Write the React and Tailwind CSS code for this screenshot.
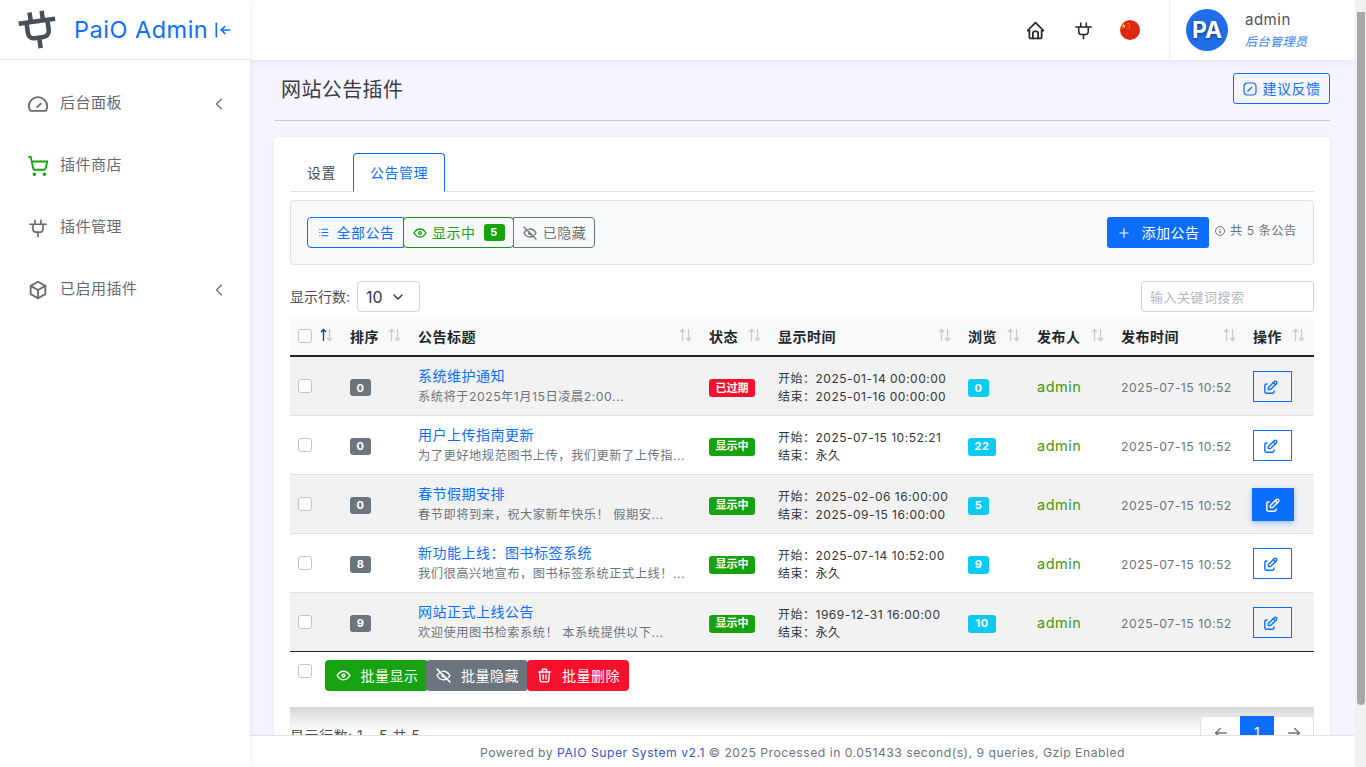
import React from "react";
import { TbHome, TbBox, TbChevronLeft, TbChevronDown, TbEye, TbEyeOff, TbPlus, TbEdit, TbTrash, TbList, TbInfoCircle, TbArrowBarToLeft, TbArrowLeft, TbArrowRight } from "react-icons/tb";
import { ShoppingCart } from "lucide-react";

const FONT = "font-['Inter','Noto_Sans_CJK_SC',sans-serif]";

function Plug({ className, sw = 2 }) {
  return (
    <svg viewBox="0 0 24 24" fill="none" stroke="currentColor" strokeWidth={sw} strokeLinecap="butt" strokeLinejoin="round" className={className}>
      <path d="M1.500 7.500h21M8.500 7.500V2M15.500 7.500V2M6 7.500v6a3.500 3.500 0 0 0 3.500 3.500h5a3.500 3.500 0 0 0 3.500-3.500v-6M12 17v6" />
    </svg>
  );
}

function Gauge({ className }) {
  return (
    <svg viewBox="0 0 24 24" fill="none" stroke="currentColor" strokeWidth="2" strokeLinecap="round" strokeLinejoin="round" className={className}>
      <path d="M4.500 19.500h15a2 2 0 0 0 1.600-1A10 10 0 0 0 22 14.500a10 10 0 0 0-20 0c0 1.500.4 2.800 1 4a1.800 1.800 0 0 0 1.500 1z" />
      <path d="M11 15.500l4-4" />
    </svg>
  );
}

function Sort({ active }) {
  return (
    <svg viewBox="0 0 13 14" className="w-[13px] h-[14px] flex-none mt-[-3px]" fill="none" strokeWidth="1.300">
      <path d="M3.500 13V1.500M1 4l2.500-2.500L6 4" stroke={active ? "#0b3d91" : "#c6c8cc"} />
      <path d="M9.500 1v11.500M7 10l2.500 2.500L12 10" stroke="#c6c8cc" />
    </svg>
  );
}

const navItems = [
  { label: "后台面板", icon: <Gauge className="w-[22px] h-[22px]" />, chev: true },
  { label: "插件商店", icon: <ShoppingCart strokeWidth={2} className="w-[22px] h-[22px] text-[#16a30f]" /> },
  { label: "插件管理", icon: <Plug className="w-[20px] h-[20px] ml-[1px]" /> },
  { label: "已启用插件", icon: <TbBox className="w-[22px] h-[22px]" />, chev: true },
];

const rows = [
  { order: 0, title: "系统维护通知", desc: "系统将于2025年1月15日凌晨2:00...", status: "已过期", start: "2025-01-14 00:00:00", end: "2025-01-16 00:00:00", views: 0 },
  { order: 0, title: "用户上传指南更新", desc: "为了更好地规范图书上传，我们更新了上传指...", status: "显示中", start: "2025-07-15 10:52:21", end: "永久", views: 22 },
  { order: 0, title: "春节假期安排", desc: "春节即将到来，祝大家新年快乐！ 假期安...", status: "显示中", start: "2025-02-06 16:00:00", end: "2025-09-15 16:00:00", views: 5, hover: true },
  { order: 8, title: "新功能上线：图书标签系统", desc: "我们很高兴地宣布，图书标签系统正式上线！...", status: "显示中", start: "2025-07-14 10:52:00", end: "永久", views: 9 },
  { order: 9, title: "网站正式上线公告", desc: "欢迎使用图书检索系统！ 本系统提供以下...", status: "显示中", start: "1969-12-31 16:00:00", end: "永久", views: 10 },
];

const heads = [
  { w: "w-[52px]", check: true },
  { w: "w-[68px]", t: "排序" },
  { w: "w-[291px]", t: "公告标题" },
  { w: "w-[69px]", t: "状态" },
  { w: "w-[190px]", t: "显示时间" },
  { w: "w-[69px]", t: "浏览" },
  { w: "w-[84px]", t: "发布人" },
  { w: "w-[132px]", t: "发布时间" },
  { w: "w-[69px]", t: "操作" },
];

const Check = ({ className = "" }) => (
  <input type="checkbox" className={`appearance-none block w-[14px] h-[14px] border border-[#c4c4c4] rounded-[3px] bg-white ${className}`} />
);

export default function App() {
  return (
    <div className={`${FONT} h-[767px] w-full flex overflow-hidden bg-[#f5f5ff] tracking-[0.5px] text-[#212529]`}>
      {/* Sidebar */}
      <aside className="w-[250px] flex-none bg-white shadow-[0_0_6px_rgba(80,80,160,0.12)] z-20 flex flex-col">
        <div className="h-[60px] flex-none border-b border-[#e3e3e8] flex items-center pl-[17px]">
          <Plug sw={2.600} className="w-[42px] h-[46px] text-[#4a4f57] rotate-[-8deg] flex-none -mt-[2px]" />
          <span className="ml-[15px] text-[23.500px] leading-none text-[#0d6efd] whitespace-nowrap">PaiO Admin</span>
          <TbArrowBarToLeft className="w-[20px] h-[20px] text-[#0d6efd] ml-[5px] flex-none" />
        </div>
        <nav className="pt-[13px] flex flex-col">
          {navItems.map((n) => (
            <div key={n.label} className="h-[62px] flex items-center pl-[27px] pr-[21px] text-[#666a70]">
              <span className="w-[33px] flex-none flex items-center">{n.icon}</span>
              <span className="text-[15px] flex-1 -mt-[1px]">{n.label}</span>
              {n.chev && <TbChevronLeft strokeWidth={1.400} className="w-[20px] h-[20px]" />}
            </div>
          ))}
        </nav>
      </aside>

      {/* Main column */}
      <div className="flex-1 min-w-0 flex flex-col">
        <header className="h-[60px] flex-none bg-white shadow-[0_2px_8px_rgba(90,90,220,0.1)] z-10 flex items-center justify-end">
          <TbHome className="w-[21px] h-[21px] text-[#25282c] mr-[28px]" />
          <Plug className="w-[19px] h-[19px] text-[#25282c] mr-[27px]" />
          <svg viewBox="0 0 20 20" className="w-[20px] h-[20px] mr-[29px]">
            <circle cx="10" cy="10" r="10" fill="#de2910" />
            <path d="M4.500 3l.8 2.300H7.700L5.800 6.700l.7 2.300-2-1.400-2 1.400.7-2.300L1.300 5.300h2.400z" fill="#ffde00" transform="translate(0 1) scale(.8)" />
            <circle cx="8" cy="3.500" r=".6" fill="#ffde00" /><circle cx="9.500" cy="5" r=".6" fill="#ffde00" /><circle cx="9.500" cy="7" r=".6" fill="#ffde00" /><circle cx="8" cy="8.500" r=".6" fill="#ffde00" />
          </svg>
          <div className="h-[60px] w-[186px] border-l border-[#eeeef2] flex items-center pl-[16px]">
            <div className="w-[42px] h-[42px] rounded-full bg-[#1f6feb] text-white font-bold text-[23px] tracking-normal flex items-center justify-center [text-shadow:0_1px_3px_rgba(0,0,40,0.6)]">PA</div>
            <div className="ml-[17px] pt-[2px]">
              <div className="text-[15px] leading-[20px] text-[#4f5359]">admin</div>
              <div className="text-[12px] leading-[20px] italic text-[#2f7df5] mt-[2px]">后台管理员</div>
            </div>
          </div>
        </header>

        <main className="flex-1 min-h-0 overflow-hidden pl-[24px] pr-[25px]">
          <div className="h-[61px] border-b border-[#c9c9d2] flex items-start justify-between">
            <h1 className="text-[20px] leading-[28px] text-[#3a3d42] pl-[7px] pt-[16px] tracking-[0.4px]">网站公告插件</h1>
            <button className="mt-[13px] h-[31px] w-[97px] border border-[#0d6efd] rounded-[3px] text-[#0d6efd] text-[14px] flex items-center justify-center gap-[6px]">
              <svg viewBox="0 0 14 14" className="w-[14px] h-[14px]" fill="none" stroke="currentColor" strokeWidth="1.200"><rect x="1" y="1" width="12" height="12" rx="3.500" /><path d="M4.500 9.500L9 5" /></svg>
              建议反馈
            </button>
          </div>

          <section className="mt-[16px] bg-white rounded-[4px] shadow-[0_1px_4px_rgba(120,120,200,0.12)] px-[16px] pt-[16px] pb-[40px]">
            <div className="flex border-b border-[#dee2e6] h-[39px] text-[14px]">
              <div className="w-[63px] flex items-center justify-center text-[#4a4e54]">设置</div>
              <div className="w-[92px] h-[39px] flex items-center justify-center text-[#0d6efd] border border-[#0d6efd] border-b-white rounded-t-[4px] bg-white">公告管理</div>
            </div>

            <div className="mt-[8px] h-[65px] bg-[#f8f9fa] border border-[#dee2e6] rounded-[4px] flex items-center pl-[16px] pr-[16px] text-[14px]">
              <button className="h-[31px] w-[97px] flex items-center justify-center gap-[7px] border border-[#0d6efd] text-[#0d6efd] rounded-l-[4px]">
                <TbList className="w-[13px] h-[13px]" />全部公告
              </button>
              <button className="h-[31px] w-[111px] -ml-[1px] flex items-center pl-[8px] border border-[#1f8f18] text-[#16a30f] rounded-[4px]">
                <TbEye className="w-[16px] h-[16px] mr-[4px]" />显示中
                <span className="ml-[8px] w-[21px] h-[17px] bg-[#16a30f] text-white text-[11px] font-bold rounded-[3px] flex items-center justify-center">5</span>
              </button>
              <button className="h-[31px] w-[82px] -ml-[1px] flex items-center justify-center gap-[5px] border border-[#6c757d] text-[#6c757d] rounded-r-[4px]">
                <TbEyeOff className="w-[16px] h-[16px]" />已隐藏
              </button>
              <div className="flex-1" />
              <button className="h-[31px] w-[102px] bg-[#0d6efd] text-white rounded-[3px] flex items-center justify-center gap-[11px]">
                <TbPlus className="w-[14px] h-[14px]" />添加公告
              </button>
              <div className="ml-[5px] text-[12.250px] text-[#6c757d] flex items-center gap-[4px] -mt-[3px] w-[83px] whitespace-nowrap">
                <TbInfoCircle className="w-[12px] h-[12px] flex-none" />共 5 条公告
              </div>
            </div>

            <div className="mt-[16px] h-[31px] flex items-center justify-between">
              <div className="flex items-center text-[14px] text-[#4a4e54] tracking-normal">
                <span className="w-[67px] flex-none whitespace-nowrap">显示行数:</span>
                <div className="w-[63px] h-[31px] border border-[#ced4da] rounded-[4px] flex items-center pl-[8px] text-[16px] tracking-normal text-[#33373c]">
                  10<TbChevronDown className="w-[16px] h-[16px] ml-[7px]" />
                </div>
              </div>
              <input placeholder="输入关键词搜索" className="w-[173px] h-[31px] border border-[#ced4da] rounded-[3px] px-[8px] text-[13px] placeholder:text-[#b4b7bb] bg-white" />
            </div>

            <div className="mt-[5px]">
              <table className="w-full table-fixed border-collapse">
                <thead>
                  <tr className="h-[39px] bg-[#f8f9fa] border-b-2 border-[#212529]">
                    {heads.map((h, i) => (
                      <th key={i} className={`${h.w} p-0 pl-[8px] pr-[9px] font-bold text-[14px] text-left`}>
                        <div className="flex items-center justify-between">
                          {h.check ? <Check /> : <span>{h.t}</span>}
                          <Sort active={h.check} />
                        </div>
                      </th>
                    ))}
                  </tr>
                </thead>
                <tbody>
                  {rows.map((r, i) => (
                    <tr key={i} className={`h-[59px] ${i === 4 ? "border-b border-[#212529]" : "border-b border-[#dee2e6]"} ${i % 2 === 0 ? "bg-[#f2f2f2]" : "bg-white"}`}>
                      <td className="p-0 pl-[8px]"><Check /></td>
                      <td className="p-0 pl-[8px] pt-[4px]">
                        <span className="flex items-center justify-center w-[21px] h-[17px] rounded-[3px] bg-[#6c757d] text-white text-[11px] font-bold">{r.order}</span>
                      </td>
                      <td className="p-0 pl-[8px]">
                        <div className="text-[14px] leading-[19px] text-[#0d6efd] whitespace-nowrap">{r.title}</div>
                        <div className="text-[12.250px] leading-[18px] mt-[3px] text-[#6c757d] whitespace-nowrap">{r.desc}</div>
                      </td>
                      <td className="p-0 pl-[8px] pt-[4px]">
                        <span className={`flex items-center justify-center w-[46px] h-[18px] rounded-[3px] text-white text-[11px] font-bold tracking-normal ${r.status === "已过期" ? "bg-[#f5112e]" : "bg-[#16a30f]"}`}>{r.status}</span>
                      </td>
                      <td className="p-0 pl-[8px] pt-[4px] text-[12px] leading-[18px] text-[#33373c] whitespace-nowrap">
                        <div>开始：{r.start}</div>
                        <div>结束：{r.end}</div>
                      </td>
                      <td className="p-0 pl-[8px] pt-[4px]">
                        <span className={`flex items-center justify-center ${r.views > 9 ? "w-[28px]" : "w-[21px]"} h-[18px] rounded-[3px] bg-[#0dcaf0] text-white text-[11px] font-bold`}>{r.views}</span>
                      </td>
                      <td className="p-0 pl-[8px] pt-[2px] text-[14.500px] leading-[20px] text-[#3f9a0e]">admin</td>
                      <td className="p-0 pl-[8px] pt-[4px] text-[12.250px] leading-[20px] text-[#6c757d] whitespace-nowrap">2025-07-15 10:52</td>
                      <td className="p-0 pl-[8px] pt-[1px]">
                        {r.hover ? (
                          <span className="flex items-center justify-center w-[42px] h-[33px] -ml-[1px] pr-[2px] pt-[2px] bg-[#0d6efd] text-white shadow-[0_2px_6px_rgba(13,110,253,0.4)]"><TbEdit className="w-[17px] h-[17px]" /></span>
                        ) : (
                          <span className="flex items-center justify-center w-[39px] h-[31px] pr-[4px] pt-[2px] border border-[#0d6efd] text-[#0d6efd]"><TbEdit className="w-[17px] h-[17px]" /></span>
                        )}
                      </td>
                    </tr>
                  ))}
                </tbody>
              </table>

              <div className="h-[55px] flex items-start pl-[8px] bg-white">
                <Check className="mt-[12px]" />
                <div className="ml-[13px] mt-[8px] flex text-[14px] text-white">
                  <button className="h-[31px] w-[103px] bg-[#16a30f] rounded-[4px] flex items-center justify-center gap-[9px]"><TbEye className="w-[17px] h-[17px]" />批量显示</button>
                  <button className="h-[31px] w-[102px] -ml-[2px] bg-[#6c757d] rounded-[4px] flex items-center justify-center gap-[9px]"><TbEyeOff className="w-[17px] h-[17px]" />批量隐藏</button>
                  <button className="h-[31px] w-[102px] -ml-[1px] bg-[#f5112e] rounded-[4px] flex items-center justify-center gap-[9px]"><TbTrash className="w-[17px] h-[17px]" />批量删除</button>
                </div>
              </div>
            </div>

            <div className="relative h-[40px] flex justify-between">
              <div className="absolute left-0 right-0 top-0 h-[24px] bg-gradient-to-b from-[#d6d6d6] to-white" />
              <span className="relative mt-[20px] text-[14px] text-[#4a4e54] leading-[18px] whitespace-nowrap">显示行数: 1 - 5 共 5</span>
              <div className="relative mt-[9px] h-[34px] w-[114px] bg-white border border-[#dee2e6] rounded-[4px] flex text-[#6c757d]">
                <span className="w-[39px] flex items-center justify-center"><TbArrowLeft className="w-[18px] h-[18px]" /></span>
                <span className="w-[34px] -mt-px h-[34px] bg-[#0d6efd] text-white text-[14px] flex items-center justify-center">1</span>
                <span className="flex-1 flex items-center justify-center"><TbArrowRight className="w-[18px] h-[18px]" /></span>
              </div>
            </div>
          </section>
        </main>

        <footer className="h-[32px] flex-none bg-white border-t border-[#e3e3e8] z-10 flex items-center justify-center pt-[3px] text-[12.200px] text-[#6c757d] whitespace-nowrap">
          Powered by&nbsp;<span className="text-[#3d55c8]">PAIO Super System v2.1</span>&nbsp;© 2025 Processed in 0.051433 second(s), 9 queries, Gzip Enabled
        </footer>
      </div>

      {/* Page scrollbar */}
      <div className="w-[11px] flex-none bg-[#f1f1f1] pt-[12px] pl-[2px] z-20">
        <div className="w-[8px] h-[693px] bg-[#a8a8a8] rounded-b-[4px]" />
      </div>
    </div>
  );
}
